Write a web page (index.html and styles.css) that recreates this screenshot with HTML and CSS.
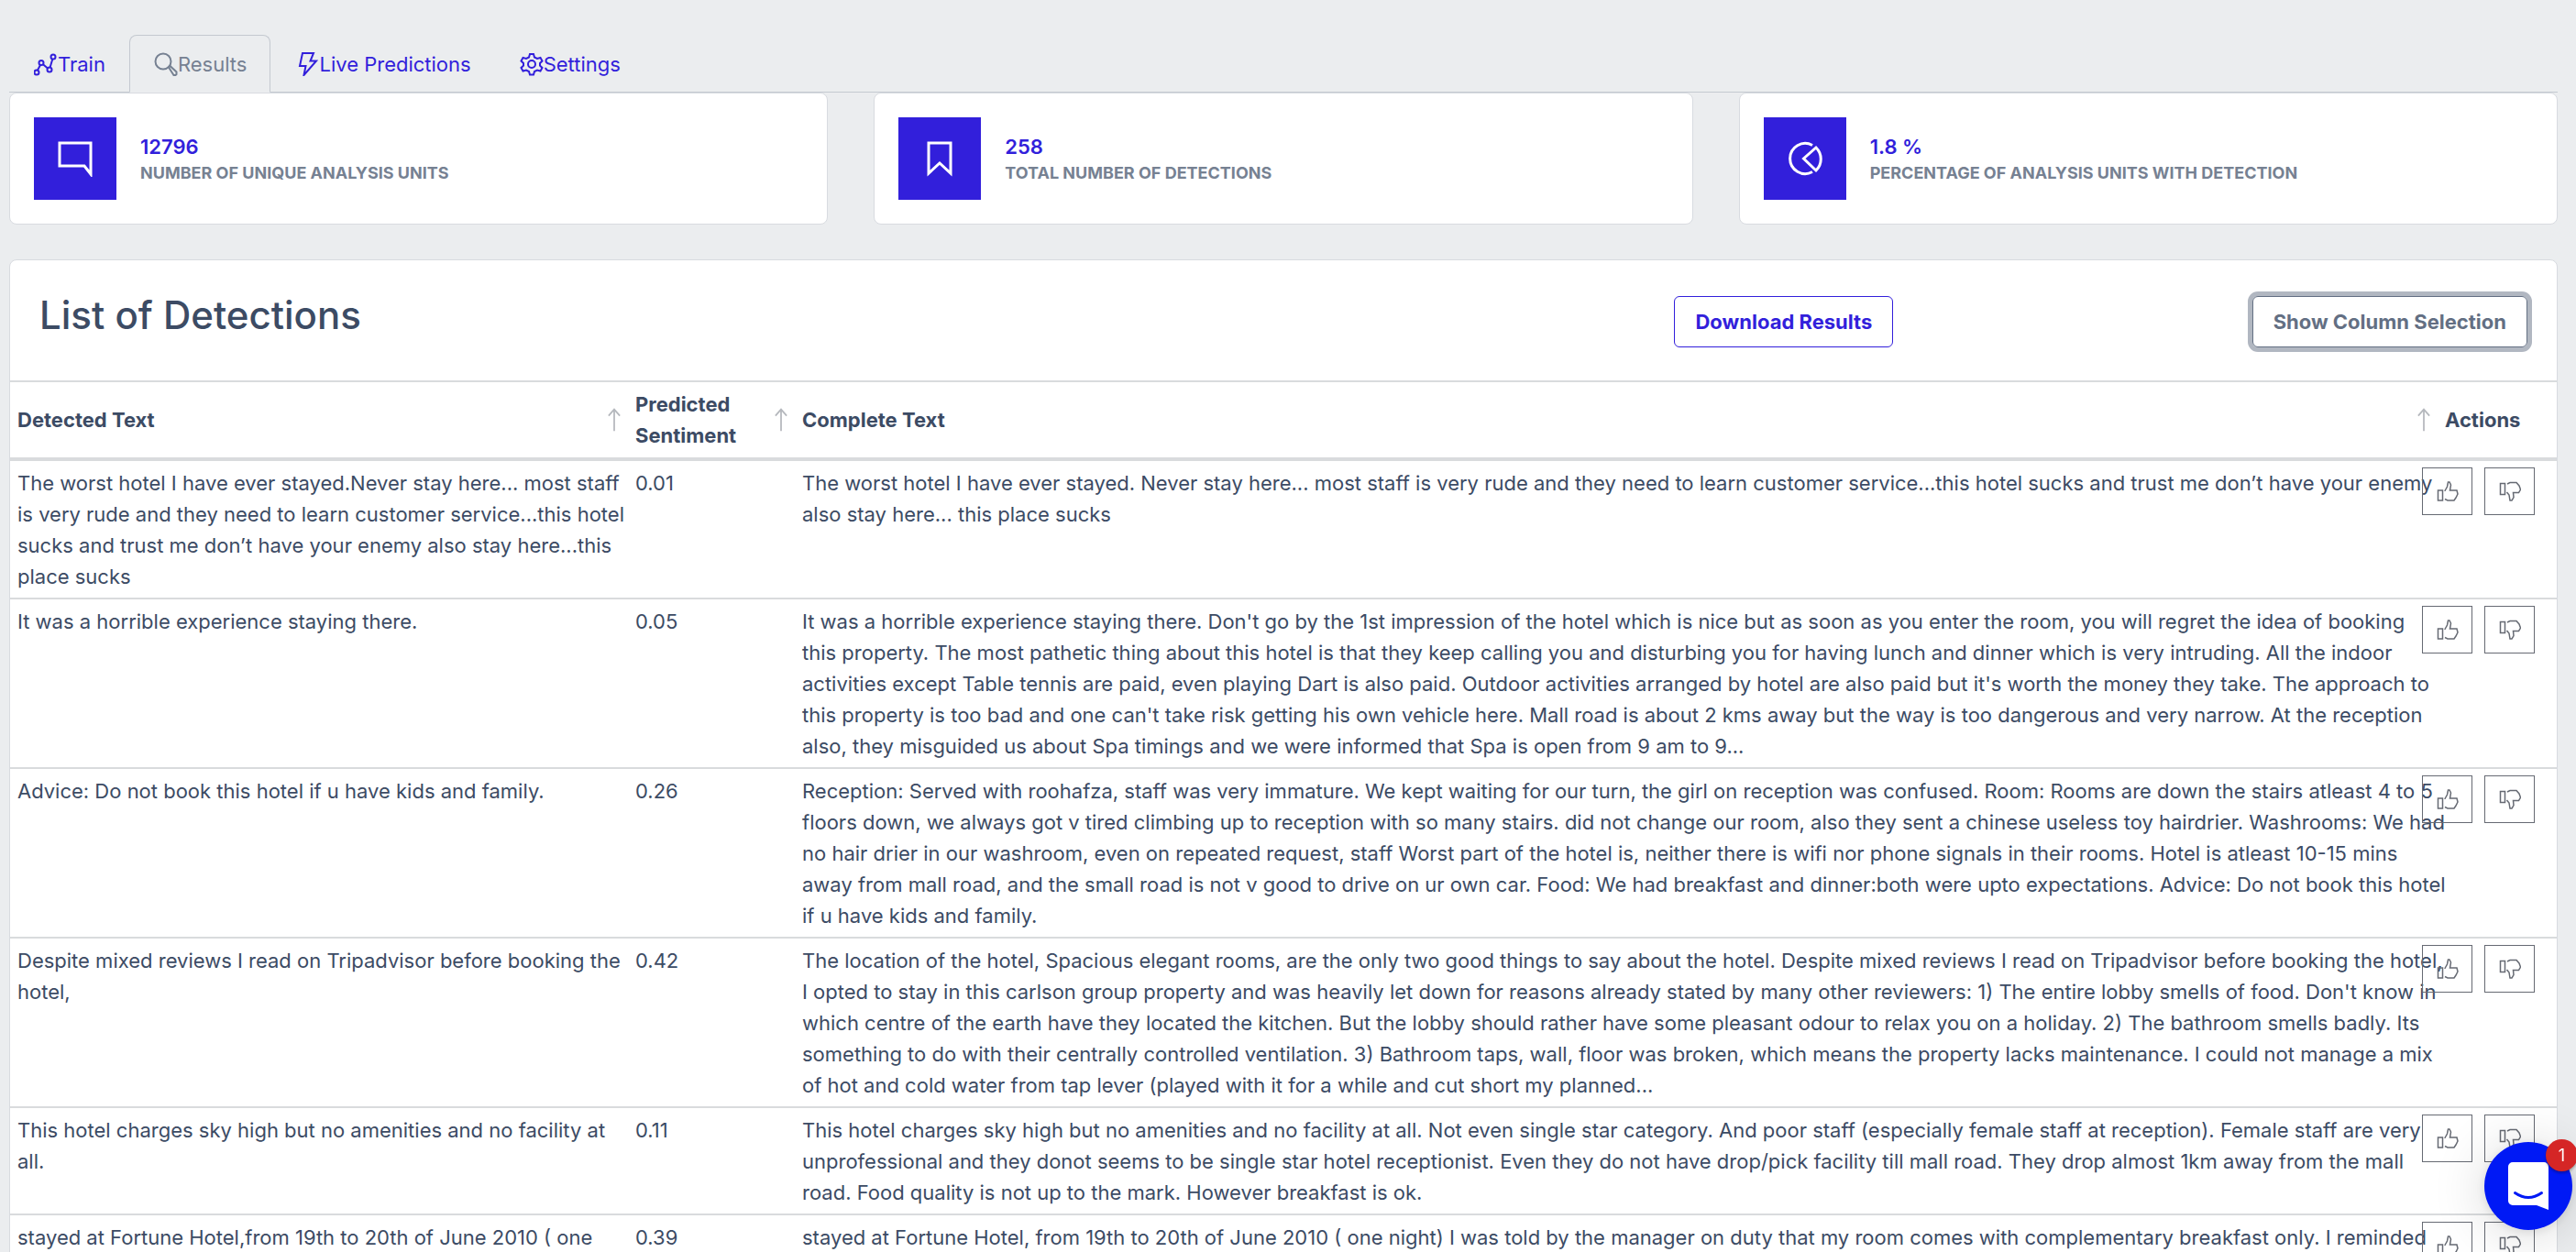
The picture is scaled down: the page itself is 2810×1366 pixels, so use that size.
FILE: index.html
```
<!DOCTYPE html>
<html lang="en">
<head>
    <meta charset="UTF-8">
    <meta name="viewport" content="width=device-width, initial-scale=1.0">
    <title>Results</title>
    <link rel="stylesheet" href="styles.css">
</head>
<body>

    <!-- Shared icons -->
    <svg class="icon-defs" aria-hidden="true">
        <symbol id="thumb-up" viewBox="0 0 24 22">
            <path d="M1.5 10h5v11h-5zM9 19.500L12 21h7l2-3 2-4-1-4h-7.500l1-6-1.500-3h-1.500L11.500 6 9 10.500M9 10.500V11"/>
        </symbol>
        <symbol id="thumb-down" viewBox="0 0 24 22">
            <path d="M1.5 2.500h5v12h-5zM9 3l3-1.500h7l3 3.500 1.500 4-2 3.500h-6l.500 5-2 3.500h-2L11 15 8.500 12"/>
        </symbol>
        <symbol id="arrow-up" viewBox="0 0 16 28">
            <path d="M8 28V1M1 9l7-8 7 8"/>
        </symbol>
    </svg>

    <!-- Tabs -->
    <nav class="tabs">
        <a href="#train" class="tab">
            <svg class="tab-icon" viewBox="0 0 26 26"><circle cx="3" cy="22" r="2.500"/><circle cx="8" cy="11.500" r="2.500"/><circle cx="17" cy="19" r="2.500"/><circle cx="21" cy="5" r="2.500"/><path d="M4 19.500l3-5.500M10 13.200l5 4.200M17.600 16.500l2.700-9"/></svg>Train
        </a>
        <a href="#results" class="tab active">
            <svg class="tab-icon" viewBox="0 0 26 26"><circle cx="10" cy="10" r="8.500"/><path d="M16 16.500l1.500-1.500 7 6.500v2.500l-1 1h-2z"/></svg>Results
        </a>
        <a href="#live" class="tab">
            <svg class="tab-icon" viewBox="0 0 26 26"><path d="M8 1h12l-3.500 8.500H23L9.500 25l2-10H5z"/></svg>Live Predictions
        </a>
        <a href="#settings" class="tab">
            <svg class="tab-icon" viewBox="0 0 26 26"><circle cx="13" cy="13" r="4"/><path d="M11 2h4l1 3.500 3 1.500 3.500-1 2 3.500-2.500 2.500v2.500l2.500 2.500-2 3.500-3.500-1-3 1.500-1 3.500h-4l-1-3.500L7 19.500l-3.500 1-2-3.500L4 14.500V12L1.500 9.500 3.500 6 7 7l3-1.500z"/></svg>Settings
        </a>
    </nav>

    <!-- Summary -->
    <div class="stats">
        <div class="card stat">
            <div class="stat-icon">
                <svg viewBox="0 0 40 40"><path d="M3 3h34v34l-7-9H3z"/></svg>
            </div>
            <div>
                <div class="stat-value">12796</div>
                <div class="stat-label">Number of unique analysis units</div>
            </div>
        </div>
        <div class="card stat">
            <div class="stat-icon">
                <svg viewBox="0 0 40 40"><path d="M8 3h24v33L20 25 8 36z"/></svg>
            </div>
            <div>
                <div class="stat-value">258</div>
                <div class="stat-label">Total number of detections</div>
            </div>
        </div>
        <div class="card stat">
            <div class="stat-icon">
                <svg viewBox="0 0 40 40"><path d="M28 5.500A16.500 16.500 0 1 0 28 34.500M32 8L18.500 20 32 33A17.500 17.500 0 0 0 32 8z"/></svg>
            </div>
            <div>
                <div class="stat-value">1.8 %</div>
                <div class="stat-label">Percentage of analysis units with detection</div>
            </div>
        </div>
    </div>

    <!-- Detections -->
    <div class="card">
        <div class="card-header">
            <h2>List of Detections</h2>
            <div class="header-buttons">
                <button type="button" class="btn btn-primary">Download Results</button>
                <button type="button" class="btn btn-secondary">Show Column Selection</button>
            </div>
        </div>

        <table>
            <colgroup>
                <col class="col-detected">
                <col class="col-sentiment">
                <col>
                <col class="col-actions">
            </colgroup>
            <thead>
                <tr>
                    <th><div class="sortable">Detected Text <svg><use href="#arrow-up"/></svg></div></th>
                    <th><div class="sortable">Predicted Sentiment <svg><use href="#arrow-up"/></svg></div></th>
                    <th><div class="sortable">Complete Text <svg><use href="#arrow-up"/></svg></div></th>
                    <th>Actions</th>
                </tr>
            </thead>
            <tbody>
                <tr>
                    <td>The worst hotel I have ever stayed.Never stay here... most staff is very rude and they need to learn customer service...this hotel sucks and trust me don’t have your enemy also stay here...this place sucks</td>
                    <td>0.01</td>
                    <td><div class="complete-text">The worst hotel I have ever stayed. Never stay here... most staff is very rude and they need to learn customer service...this hotel sucks and trust me don’t have your enemy also stay here... this place sucks</div></td>
                    <td>
                        <div class="actions">
                            <button type="button" aria-label="Thumbs up"><svg><use href="#thumb-up"/></svg></button>
                            <button type="button" aria-label="Thumbs down"><svg><use href="#thumb-down"/></svg></button>
                        </div>
                    </td>
                </tr>
                <tr>
                    <td>It was a horrible experience staying there.</td>
                    <td>0.05</td>
                    <td><div class="complete-text">It was a horrible experience staying there. Don't go by the 1st impression of the hotel which is nice but as soon as you enter the room, you will regret the idea of booking<br>this property. The most pathetic thing about this hotel is that they keep calling you and disturbing you for having lunch and dinner which is very intruding. All the indoor<br>activities except Table tennis are paid, even playing Dart is also paid. Outdoor activities arranged by hotel are also paid but it's worth the money they take. The approach to this property is too bad and one can't take risk getting his own vehicle here. Mall road is about 2 kms away but the way is too dangerous and very narrow. At the reception<br>also, they misguided us about Spa timings and we were informed that Spa is open from 9 am to 9...</div></td>
                    <td>
                        <div class="actions">
                            <button type="button" aria-label="Thumbs up"><svg><use href="#thumb-up"/></svg></button>
                            <button type="button" aria-label="Thumbs down"><svg><use href="#thumb-down"/></svg></button>
                        </div>
                    </td>
                </tr>
                <tr>
                    <td>Advice: Do not book this hotel if u have kids and family.</td>
                    <td>0.26</td>
                    <td><div class="complete-text">Reception: Served with roohafza, staff was very immature. We kept waiting for our turn, the girl on reception was confused. Room: Rooms are down the stairs atleast 4 to 5 floors down, we always got v tired climbing up to reception with so many stairs. did not change our room, also they sent a chinese useless toy hairdrier. Washrooms: We had no hair drier in our washroom, even on repeated request, staff Worst part of the hotel is, neither there is wifi nor phone signals in their rooms. Hotel is atleast 10-15 mins<br>away from mall road, and the small road is not v good to drive on ur own car. Food: We had breakfast and dinner:both were upto expectations. Advice: Do not book this hotel if u have kids and family.</div></td>
                    <td>
                        <div class="actions">
                            <button type="button" aria-label="Thumbs up"><svg><use href="#thumb-up"/></svg></button>
                            <button type="button" aria-label="Thumbs down"><svg><use href="#thumb-down"/></svg></button>
                        </div>
                    </td>
                </tr>
                <tr>
                    <td>Despite mixed reviews I read on Tripadvisor before booking the hotel,</td>
                    <td>0.42</td>
                    <td><div class="complete-text">The location of the hotel, Spacious elegant rooms, are the only two good things to say about the hotel. Despite mixed reviews I read on Tripadvisor before booking the hotel,<br>I opted to stay in this carlson group property and was heavily let down for reasons already stated by many other reviewers: 1) The entire lobby smells of food. Don't know in which centre of the earth have they located the kitchen. But the lobby should rather have some pleasant odour to relax you on a holiday. 2) The bathroom smells badly. Its something to do with their centrally controlled ventilation. 3) Bathroom taps, wall, floor was broken, which means the property lacks maintenance. I could not manage a mix of hot and cold water from tap lever (played with it for a while and cut short my planned...</div></td>
                    <td>
                        <div class="actions">
                            <button type="button" aria-label="Thumbs up"><svg><use href="#thumb-up"/></svg></button>
                            <button type="button" aria-label="Thumbs down"><svg><use href="#thumb-down"/></svg></button>
                        </div>
                    </td>
                </tr>
                <tr>
                    <td>This hotel charges sky high but no amenities and no facility at all.</td>
                    <td>0.11</td>
                    <td><div class="complete-text">This hotel charges sky high but no amenities and no facility at all. Not even single star category. And poor staff (especially female staff at reception). Female staff are very unprofessional and they donot seems to be single star hotel receptionist. Even they do not have drop/pick facility till mall road. They drop almost 1km away from the mall road. Food quality is not up to the mark. However breakfast is ok.</div></td>
                    <td>
                        <div class="actions">
                            <button type="button" aria-label="Thumbs up"><svg><use href="#thumb-up"/></svg></button>
                            <button type="button" aria-label="Thumbs down"><svg><use href="#thumb-down"/></svg></button>
                        </div>
                    </td>
                </tr>
                <tr>
                    <td>stayed at Fortune Hotel,from 19th to 20th of June 2010 ( one</td>
                    <td>0.39</td>
                    <td><div class="complete-text">stayed at Fortune Hotel, from 19th to 20th of June 2010 ( one night) I was told by the manager on duty that my room comes with complementary breakfast only. I reminded</div></td>
                    <td>
                        <div class="actions">
                            <button type="button" aria-label="Thumbs up"><svg><use href="#thumb-up"/></svg></button>
                            <button type="button" aria-label="Thumbs down"><svg><use href="#thumb-down"/></svg></button>
                        </div>
                    </td>
                </tr>
            </tbody>
        </table>
    </div>

    <!-- Chat launcher -->
    <button type="button" class="chat" aria-label="Open chat">
        <svg viewBox="0 0 44 52">
            <path fill="#fff" d="M5 0h34a5 5 0 0 1 5 5v47l-13-5H5a5 5 0 0 1-5-5V5a5 5 0 0 1 5-5z"/>
            <path fill="none" stroke="#0019f5" stroke-width="3" stroke-linecap="round" d="M7.500 33.500q14.500 10 29 0"/>
        </svg>
        <span class="chat-badge">1</span>
    </button>

</body>
</html>
```
FILE: styles.css
```
* {
    margin: 0;
    padding: 0;
    box-sizing: border-box;
}

body {
    background: #ebedef;
    color: #3c4b64;
    font-family: Inter, "Open Sans", sans-serif;
    font-size: 22px;
    line-height: 34px;
    padding: 38px 20px 38px 10px;
}

button {
    font-family: inherit;
    font-size: 22px;
    background: transparent;
    cursor: pointer;
}

svg {
    fill: none;
    stroke: currentColor;
}

.icon-defs {
    display: none;
}

/* Tabs */
.tabs {
    display: flex;
    border-bottom: 1px solid #c4c9d0;
}

.tab {
    display: flex;
    align-items: center;
    padding: 14px 25px 13px 26px;
    margin-bottom: -1px;
    border: 1px solid transparent;
    border-radius: 8px 8px 0 0;
    color: #321fdb;
    text-decoration: none;
}

.tab.active {
    color: #768192;
    background: #ebedef;
    border-color: #c4c9d0;
    border-bottom-color: #ebedef;
}

.tab-icon {
    width: 26px;
    height: 26px;
    stroke-width: 2;
}

/* Cards */
.card {
    background: #fff;
    border: 1px solid #d8dbe0;
    border-radius: 8px;
}

.stats {
    display: grid;
    grid-template-columns: repeat(3, 1fr);
    gap: 50px;
    margin-bottom: 38px;
}

.stat {
    display: flex;
    align-items: center;
    gap: 26px;
    padding: 26px;
}

.stat-icon {
    display: flex;
    align-items: center;
    justify-content: center;
    width: 90px;
    height: 90px;
    background: #321fdb;
    color: #fff;
}

.stat-icon svg {
    width: 40px;
    height: 40px;
    stroke-width: 3;
}

.stat-value {
    color: #321fdb;
    font-weight: 600;
    line-height: 32px;
}

.stat-label {
    color: #768192;
    font-size: 18px;
    font-weight: 700;
    line-height: 26px;
    text-transform: uppercase;
}

.card-header {
    display: grid;
    grid-template-columns: 23fr 12fr;
    align-items: start;
    padding: 39px 32px 36px;
}

h2 {
    font-size: 42px;
    font-weight: 500;
    line-height: 42px;
}

.header-buttons {
    display: flex;
    justify-content: space-between;
}

.btn {
    height: 56px;
    padding: 0 22px;
    border: 1px solid;
    border-radius: 6px;
    font-weight: 700;
}

.btn-primary {
    color: #321fdb;
}

.btn-secondary {
    color: #636f83;
    box-shadow: 0 0 0 5px #b1b7c1;
}

/* Detections table */
table {
    width: 100%;
    table-layout: fixed;
    border-collapse: separate;
    border-spacing: 0;
}

.col-detected {
    width: 674px;
}

.col-sentiment {
    width: 182px;
}

.col-actions {
    width: 130px;
}

th {
    padding: 7px 8px;
    border-top: 2px solid #d9dbdd;
    border-bottom: 4px solid #d9dbdd;
    font-weight: 700;
    text-align: left;
}

.sortable {
    display: flex;
    align-items: center;
    justify-content: space-between;
}

.sortable svg {
    flex: none;
    width: 14px;
    height: 28px;
    color: #b5b8bd;
    stroke-width: 2;
}

td {
    padding: 7px 0 6px 8px;
    border-top: 2px solid #d9dbdd;
    vertical-align: top;
}

tbody tr:first-child td {
    border-top: none;
}

/* long reviews run a little under the action buttons */
.complete-text {
    margin-right: -10px;
}

.actions {
    display: flex;
    justify-content: flex-end;
    gap: 13px;
    padding-right: 24px;
}

.actions button {
    flex: none;
    display: flex;
    align-items: center;
    justify-content: center;
    width: 55px;
    height: 52px;
    border: 1px solid #666a73;
    color: #666a73;
}

.actions svg {
    width: 24px;
    height: 22px;
    stroke-width: 1.5;
}

/* Chat launcher */
.chat {
    position: fixed;
    right: 4px;
    bottom: 24px;
    display: flex;
    align-items: center;
    justify-content: center;
    width: 96px;
    height: 96px;
    border: none;
    border-radius: 50%;
    background: #0019f5;
    box-shadow: 0 2px 12px rgba(0, 0, 0, 0.1), 0 4px 60px rgba(0, 0, 0, 0.16);
}

.chat svg {
    width: 44px;
    height: 52px;
    stroke: none;
}

.chat-badge {
    position: absolute;
    top: -3px;
    right: -6px;
    width: 35px;
    height: 35px;
    border-radius: 50%;
    background: #d52626;
    color: #fff;
    font-size: 18px;
    line-height: 35px;
    text-align: center;
    box-shadow: 0 2px 3px rgba(0, 0, 0, 0.3);
}
```
